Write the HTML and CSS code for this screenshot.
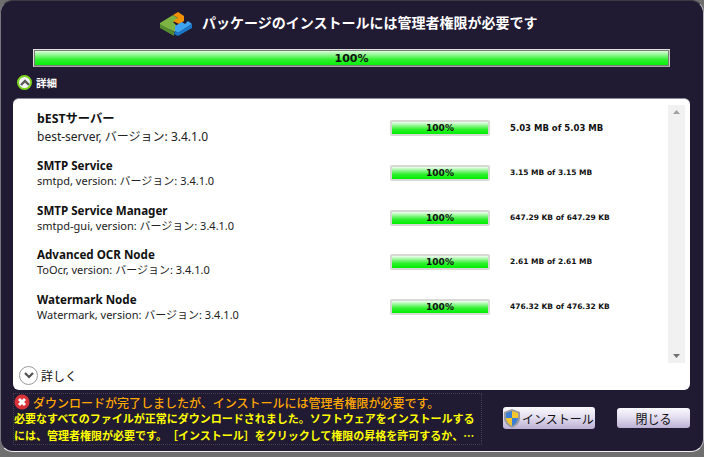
FILE: index.html
```html
<!DOCTYPE html>
<html lang="ja">
<head>
<meta charset="utf-8">
<title>インストール</title>
<link rel="stylesheet" href="styles.css">
</head>
<body>
<div class="window">
  <header class="head">
    <svg class="logo" width="32" height="24" viewBox="0 0 32 24">
      <path fill="#7cb342" d="M0 11 L13 3 L19 7 L13 10 L16 13 L15 20 L0 13z"/>
      <path fill="#558b2f" d="M0 12 L14 20 L14 24 L0 16z"/>
      <path fill="#f39200" d="M13 3 L18 0 L24 4 L24 9 L19 12 L13 9 L18 6z"/>
      <path fill="#3fa4ef" d="M15 14 L22 10 L25 12 L28 9 L32 12 L18 21 L15 19z"/>
      <path fill="#1b78c8" d="M15 19 L18 21 L32 12 L32 16 L18 24 L14 22z"/>
    </svg>
    <h1 class="title">パッケージのインストールには管理者権限が必要です</h1>
  </header>
  <div class="bar bar-main"><span>100%</span></div>
  <div class="toggle toggle-top">
    <span class="round round-green"><svg width="10" height="7" viewBox="0 0 10 7"><path d="M1 6 L5 2 L9 6" fill="none" stroke="#5a5a5a" stroke-width="2.4"/></svg></span>
    <span>詳細</span>
  </div>
  <main class="panel">
    <div class="list">
      <section class="item item-first">
        <div class="info"><div class="name">bESTサーバー</div><div class="ver">best-server, バージョン: 3.4.1.0</div></div>
        <div class="bar bar-small"><span>100%</span></div>
        <div class="size">5.03 MB of 5.03 MB</div>
      </section>
      <section class="item">
        <div class="info"><div class="name">SMTP Service</div><div class="ver">smtpd, version: バージョン: 3.4.1.0</div></div>
        <div class="bar bar-small"><span>100%</span></div>
        <div class="size">3.15 MB of 3.15 MB</div>
      </section>
      <section class="item">
        <div class="info"><div class="name">SMTP Service Manager</div><div class="ver">smtpd-gui, version: バージョン: 3.4.1.0</div></div>
        <div class="bar bar-small"><span>100%</span></div>
        <div class="size">647.29 KB of 647.29 KB</div>
      </section>
      <section class="item">
        <div class="info"><div class="name">Advanced OCR Node</div><div class="ver">ToOcr, version: バージョン: 3.4.1.0</div></div>
        <div class="bar bar-small"><span>100%</span></div>
        <div class="size">2.61 MB of 2.61 MB</div>
      </section>
      <section class="item">
        <div class="info"><div class="name">Watermark Node</div><div class="ver">Watermark, version: バージョン: 3.4.1.0</div></div>
        <div class="bar bar-small"><span>100%</span></div>
        <div class="size">476.32 KB of 476.32 KB</div>
      </section>
    </div>
    <div class="scroll">
      <svg width="7" height="4" viewBox="0 0 7 4"><path d="M0 4 L3.5 0 L7 4z" fill="#a0a0a0"/></svg>
      <svg width="7" height="4" viewBox="0 0 7 4"><path d="M0 0 L3.5 4 L7 0z" fill="#707070"/></svg>
    </div>
    <div class="toggle toggle-more">
      <span class="round round-gray"><svg width="10" height="7" viewBox="0 0 10 7"><path d="M1 1 L5 5 L9 1" fill="none" stroke="#505050" stroke-width="2.2"/></svg></span>
      <span>詳しく</span>
    </div>
  </main>
  <footer class="foot">
    <div class="msg">
      <div class="msg-head">
        <svg width="16" height="16" viewBox="0 0 16 16"><circle cx="8" cy="8" r="7.5" fill="#d9333a"/><path d="M5 5 L11 11 M11 5 L5 11" stroke="#fff" stroke-width="3"/></svg>
        <span>ダウンロードが完了しましたが、インストールには管理者権限が必要です。</span>
      </div>
      <p class="msg-body">必要なすべてのファイルが正常にダウンロードされました。ソフトウェアをインストールするには、管理者権限が必要です。［インストール］をクリックして権限の昇格を許可するか、…</p>
    </div>
    <button class="btn btn-install">
      <svg width="16" height="19" viewBox="0 0 16 19">
        <path d="M8 0 L16 3 L16 9 C16 14 12 17 8 19 C4 17 0 14 0 9 L0 3z" fill="#9a9aa0"/>
        <path d="M8 2 L2 4 L2 9 L8 9z" fill="#3b7fd6"/>
        <path d="M8 2 L14 4 L14 9 L8 9z" fill="#f3c52f"/>
        <path d="M2 9 L8 9 L8 17 C5 15.5 2.500 13 2 9z" fill="#f3c52f"/>
        <path d="M14 9 L8 9 L8 17 C11 15.500 13.500 13 14 9z" fill="#3b7fd6"/>
      </svg>
      <span>インストール</span>
    </button>
    <button class="btn btn-close">閉じる</button>
  </footer>
</div>
</body>
</html>
```
FILE: styles.css
```css
* { box-sizing: border-box; }
html, body { margin: 0; padding: 0; }
body {
  width: 704px;
  height: 457px;
  overflow: hidden;
  background: #6f6f6f;
  font-family: "DejaVu Sans", "Noto Sans CJK JP", sans-serif;
  text-spacing-trim: space-all;
}
.window {
  width: 704px;
  height: 452px;
  padding-top: 1px;
  background: #211a33;
  border: 1px solid #b9b9bf;
  border-top-color: #3a3a42;
  border-left-color: #77757e;
  border-bottom-color: #f2f2f2;
  border-radius: 13px;
  display: flex;
  flex-direction: column;
}
.head {
  height: 43px;
  display: flex;
  align-items: center;
  padding-left: 159px;
  gap: 10px;
}
.logo { flex: none; }
.title {
  margin: 0 0 4px;
  font: bold 14px "Noto Sans CJK JP", sans-serif;
  color: #fff;
  white-space: nowrap;
}
.bar {
  display: flex;
  align-items: center;
  justify-content: center;
  color: #111;
  background: linear-gradient(#f0fff0 0%, #a0f8a0 25%, #30f030 60%, #00ee00 100%);
  border: 1px solid #e2e2dc;
  border-bottom-color: #a9a9a4;
  border-right-color: #c8c8c2;
}
.bar-main {
  width: 637px;
  height: 18px;
  margin: 4px 0 0 32px;
  font-size: 11px;
  font-weight: bold;
  box-shadow: inset 0 0 0 1px #7a7a76;
}
.bar-small {
  width: 100px;
  height: 16px;
  flex: none;
  font-size: 9px;
  font-weight: bold;
  border: 2px solid #d8d8d4;
  border-radius: 2px;
}
.toggle {
  display: flex;
  align-items: center;
  font-family: "Noto Sans CJK JP", sans-serif;
}
.toggle-top {
  height: 17px;
  margin: 7px 0 0 16px;
  gap: 4px;
  color: #fff;
  font-size: 10.500px;
  font-weight: bold;
}
.round {
  display: flex;
  align-items: center;
  justify-content: center;
  border-radius: 50%;
  background: #f4f4f4;
  flex: none;
}
.round-green { width: 15px; height: 15px; border: 2px solid #7dd61e; }
.round-gray { width: 19px; height: 19px; border: 1px solid #9a9a9a; background: #fff; }
.panel {
  position: relative;
  width: 677px;
  height: 292px;
  margin: 7px 0 0 12px;
  padding: 0 5px 0 24px;
  background: #fff;
  border-radius: 6px;
  border-top: 1px solid #8d8b99;
  display: flex;
}
.list {
  flex: 1;
  padding-top: 12px;
  display: flex;
  flex-direction: column;
  gap: 14.400px;
}
.item {
  display: flex;
  align-items: center;
}
.info { width: 353px; flex: none; }
.name {
  font: bold 11.600px/16px "Noto Sans", "Noto Sans CJK JP", sans-serif;
  color: #111;
}
.ver {
  font: 11px/14px "Noto Sans", "Noto Sans CJK JP", sans-serif;
  color: #222;
  white-space: nowrap;
}
.item-first .name { font-size: 12.300px; }
.item-first .ver { margin-top: 3px; font-size: 12px; }
.size {
  margin-left: 20px;
  font-size: 7.500px;
  font-weight: bold;
  line-height: 12px;
  color: #111;
  white-space: nowrap;
}
.item-first .size { font-size: 8.500px; }
.scroll {
  width: 17px;
  height: 258px;
  margin-top: 6px;
  padding: 5px 0;
  background: #f1f1f1;
  display: flex;
  flex-direction: column;
  justify-content: space-between;
  align-items: center;
}
.toggle-more {
  position: absolute;
  left: 6px;
  bottom: 5px;
  gap: 3px;
  font-size: 12px;
  color: #111;
}
.foot {
  display: flex;
  align-items: flex-start;
  padding: 3px 0 0 12px;
}
.msg {
  width: 469px;
  height: 52px;
  border: 1px dotted #44404f;
  overflow: hidden;
}
.msg-head {
  display: flex;
  align-items: center;
  gap: 3px;
  height: 16px;
  color: #ffa800;
  font: 500 12px "Noto Sans CJK JP", sans-serif;
  white-space: nowrap;
}
.msg-body {
  margin: 0;
  color: #ffff00;
  font: bold 11px/16.500px "Noto Sans CJK JP", sans-serif;
}
.btn {
  margin: 0;
  padding: 0;
  border: 0;
  border-radius: 3px;
  color: #111;
  background: linear-gradient(#faf9fd 0%, #e4dff0 45%, #bcb0d4 100%);
  font: 12px "Noto Sans CJK JP", sans-serif;
  display: flex;
  align-items: center;
  justify-content: center;
  white-space: nowrap;
}
.btn-install {
  width: 92px;
  height: 22px;
  margin: 14px 0 0 21px;
  gap: 2px;
}
.btn-close {
  width: 73px;
  height: 20px;
  margin: 15px 0 0 22px;
}
```
